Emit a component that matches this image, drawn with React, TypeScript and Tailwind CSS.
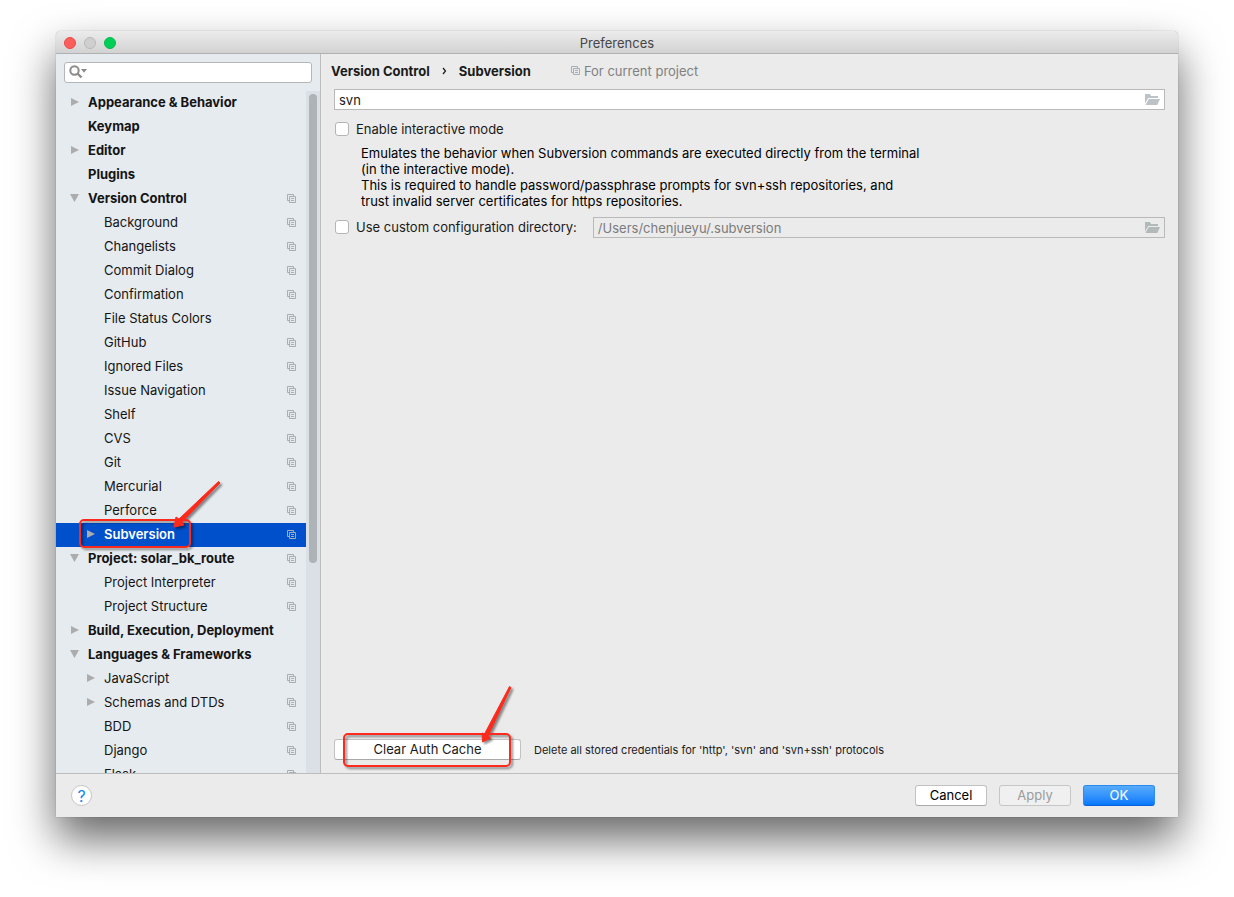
import { clsx } from "clsx"

type Item = {
  label: string
  level?: number
  bold?: boolean
  arrow?: "right" | "down"
  project?: boolean
  selected?: boolean
}

const items: Item[] = [
  { label: "Appearance & Behavior", bold: true, arrow: "right" },
  { label: "Keymap", bold: true },
  { label: "Editor", bold: true, arrow: "right" },
  { label: "Plugins", bold: true },
  { label: "Version Control", bold: true, arrow: "down", project: true },
  { label: "Background", level: 1, project: true },
  { label: "Changelists", level: 1, project: true },
  { label: "Commit Dialog", level: 1, project: true },
  { label: "Confirmation", level: 1, project: true },
  { label: "File Status Colors", level: 1, project: true },
  { label: "GitHub", level: 1, project: true },
  { label: "Ignored Files", level: 1, project: true },
  { label: "Issue Navigation", level: 1, project: true },
  { label: "Shelf", level: 1, project: true },
  { label: "CVS", level: 1, project: true },
  { label: "Git", level: 1, project: true },
  { label: "Mercurial", level: 1, project: true },
  { label: "Perforce", level: 1, project: true },
  { label: "Subversion", level: 1, arrow: "right", project: true, selected: true },
  { label: "Project: solar_bk_route", bold: true, arrow: "down", project: true },
  { label: "Project Interpreter", level: 1, project: true },
  { label: "Project Structure", level: 1, project: true },
  { label: "Build, Execution, Deployment", bold: true, arrow: "right" },
  { label: "Languages & Frameworks", bold: true, arrow: "down" },
  { label: "JavaScript", level: 1, arrow: "right", project: true },
  { label: "Schemas and DTDs", level: 1, arrow: "right", project: true },
  { label: "BDD", level: 1, project: true },
  { label: "Django", level: 1, project: true },
  { label: "Flask", level: 1, project: true },
]

function ProjectIcon() {
  return (
    <svg className="shrink-0" width="9" height="9" viewBox="0 0 9 9" fill="none" stroke="#a3aeb6" aria-hidden="true">
      <path d="M2 6.5H.5v-6h6V2" />
      <path d="M2.5 2.5h6v6h-6z" />
      <path d="M4 4.5h3M4 6.5h3" />
    </svg>
  )
}

function TreeArrow({ direction }: { direction?: "right" | "down" }) {
  return (
    <svg className="shrink-0" width="10" height="10" viewBox="0 0 10 10" fill="#acacac" aria-hidden="true">
      {direction === "right" && <path d="M1 1l8 4-8 4z" />}
      {direction === "down" && <path d="M0 1h9L4.500 9z" />}
    </svg>
  )
}

function FolderIcon({ color }: { color: string }) {
  return (
    <svg width="15" height="11" viewBox="0 0 15 11" aria-hidden="true">
      <path fill={color} d="M0 0h5l1 2h7v2H3.200L0 9.500z" />
      <path fill={color} d="M3.700 5H15l-2.700 6H.5z" />
    </svg>
  )
}

function SearchIcon() {
  return (
    <svg width="19" height="14" viewBox="0 0 19 14" fill="none" aria-hidden="true">
      <circle cx="5.500" cy="5.500" r="4.200" stroke="#8a8a8a" strokeWidth="2" />
      <path d="M8.500 8.500l4 4" stroke="#8a8a8a" strokeWidth="2.400" />
      <path d="M12 4h6l-3 3.800z" fill="#8a8a8a" />
    </svg>
  )
}

function SidebarMarker() {
  return (
    <svg
      className="pointer-events-none absolute -top-11 left-5 z-10 drop-shadow-[2px_2px_1px_rgba(0,0,0,0.45)]"
      width="150"
      height="74"
      viewBox="0 0 150 74"
      aria-hidden="true"
    >
      <rect x="4" y="41" width="110" height="27" rx="4" fill="none" stroke="#fc2a1c" strokeWidth="2" />
      <path d="M142.500 2.500L144 4 106 43l2 3-10 2 2-10 3 2z" fill="#fc2a1c" stroke="#fc2a1c" strokeLinejoin="round" />
    </svg>
  )
}

function ButtonMarker() {
  return (
    <svg
      className="pointer-events-none absolute -top-14 left-2 z-10 drop-shadow-[2px_2px_1px_rgba(0,0,0,0.45)]"
      width="180"
      height="90"
      viewBox="0 0 180 90"
      aria-hidden="true"
    >
      <rect x="2" y="51" width="166" height="32" rx="4" fill="none" stroke="#fc2a1c" strokeWidth="2" />
      <path d="M167.500 3.500l1.500 1L146 53l2.500 2-8 4-.5-9 2.500 1z" fill="#fc2a1c" stroke="#fc2a1c" strokeLinejoin="round" />
    </svg>
  )
}

function TreeRow({ item }: { item: Item }) {
  return (
    <li className="relative">
      <button
        type="button"
        className={clsx(
          "flex h-6 w-full items-center gap-2 pr-2.5 pb-0.5 text-left",
          item.level ? "pl-[30px]" : "pl-3.5",
          item.bold && "font-bold",
          item.selected ? "bg-[#004fcb] font-semibold text-white" : "text-[#141414]"
        )}
      >
        <TreeArrow direction={item.arrow} />
        <span className="flex-1 whitespace-nowrap">{item.label}</span>
        {item.project && <ProjectIcon />}
      </button>
      {item.selected && <SidebarMarker />}
    </li>
  )
}

function Sidebar() {
  return (
    <aside className="flex w-[265px] shrink-0 flex-col gap-2 border-r border-[#bdbdbd] bg-[#e6ebef] pt-2">
      <label className="mx-2 flex h-[21px] items-center rounded-[3px] border border-[#b4b7b9] bg-white pb-0.5 pl-1">
        <SearchIcon />
        <input type="text" aria-label="Search" className="min-w-0 flex-1 px-1 outline-none" />
      </label>
      <div className="flex min-h-0 flex-1 overflow-hidden">
        <ul className="min-w-0 flex-1">
          {items.map((item) => (
            <TreeRow key={item.label} item={item} />
          ))}
        </ul>
        <div className="w-3.5 shrink-0 bg-[#dae0e5] px-[3px] pt-[3px]">
          <div className="h-[69%] rounded-full bg-[#adb3b7]"></div>
        </div>
      </div>
    </aside>
  )
}

function Settings() {
  return (
    <main className="flex min-w-0 flex-1 flex-col">
      <div className="flex h-[35px] shrink-0 items-center pb-0.5 pl-2.5">
        <h1 className="flex items-center gap-3 font-bold text-[#1a1a1a]">
          Version Control
          <svg width="5" height="8" viewBox="0 0 5 8" fill="none" stroke="#1a1a1a" strokeWidth="1.200" aria-hidden="true">
            <path d="M1 1l2.500 3L1 7" />
          </svg>
          Subversion
        </h1>
        <p className="ml-10 flex items-center gap-1 text-[#808080]">
          <ProjectIcon />
          For current project
        </p>
      </div>

      <div className="flex min-h-0 flex-1 flex-col px-[13px] pb-[13px]">
        <div className="flex h-[21px] items-center border border-[#b9b9b9] bg-white pr-1">
          <input type="text" aria-label="Path to Subversion executable" defaultValue="svn" className="min-w-0 flex-1 px-1 outline-none" />
          <button type="button" aria-label="Browse executable">
            <FolderIcon color="#bcc4c9" />
          </button>
        </div>

        <label className="mt-[11px] flex h-4 items-center gap-[7px] pl-px">
          <input type="checkbox" className="size-3.5 appearance-none rounded-[3px] border border-[#b5b5b5] bg-white" />
          Enable interactive mode
        </label>
        <p className="mt-2 pl-[27px] leading-4 text-black">
          Emulates the behavior when Subversion commands are executed directly from the terminal
          <br />
          (in the interactive mode).
          <br />
          This is required to handle password/passphrase prompts for svn+ssh repositories, and
          <br />
          trust invalid server certificates for https repositories.
        </p>

        <div className="mt-2 flex items-center gap-4">
          <label className="flex items-center gap-[7px] pb-px pl-px">
            <input type="checkbox" className="size-3.5 appearance-none rounded-[3px] border border-[#b5b5b5] bg-white" />
            Use custom configuration directory:
          </label>
          <div className="flex h-[21px] min-w-0 flex-1 items-center border border-[#b9b9b9] pr-1">
            <input
              type="text"
              aria-label="Configuration directory"
              defaultValue="/Users/chenjueyu/.subversion"
              disabled
              className="min-w-0 flex-1 px-1 text-[#7b7b7b]"
            />
            <button type="button" aria-label="Browse directory" disabled>
              <FolderIcon color="#b1b9ba" />
            </button>
          </div>
        </div>

        <div className="mt-auto flex items-center gap-[13px]">
          <div className="relative">
            <button type="button" className="h-[21px] w-[187px] rounded-[3px] border border-[#c2c2c2] border-b-[#a9a9a9] bg-white pb-px">
              Clear Auth Cache
            </button>
            <ButtonMarker />
          </div>
          <p className="text-[11px]">Delete all stored credentials for 'http', 'svn' and 'svn+ssh' protocols</p>
        </div>
      </div>
    </main>
  )
}

export default function App() {
  return (
    <div className="h-screen overflow-hidden bg-white px-14 pt-[31px] pb-20 font-[Inter,sans-serif] text-[13px] leading-4 text-[#1a1a1a]">
      <div className="flex h-full flex-col rounded-t-[5px] bg-[#ebebeb] shadow-[0_0_1px_rgba(0,0,0,0.5),0_22px_44px_rgba(0,0,0,0.6)]">
        <header className="relative flex h-[23px] shrink-0 items-center justify-center rounded-t-[5px] border-b border-[#b1b1b1] bg-linear-to-b from-[#ececec] to-[#d2d2d2] pt-0.5 text-[#464646]">
          <div className="absolute left-2 flex gap-2">
            <button type="button" aria-label="Close" className="size-3 rounded-full border border-[#e94b47] bg-[#fc5f5b]"></button>
            <button type="button" aria-label="Minimize" className="size-3 rounded-full border border-[#b9b9b9] bg-[#cfcfcf]"></button>
            <button type="button" aria-label="Zoom" className="size-3 rounded-full border border-[#06b94e] bg-[#00cf57]"></button>
          </div>
          Preferences
        </header>

        <div className="flex min-h-0 flex-1">
          <Sidebar />
          <Settings />
        </div>

        <footer className="flex h-11 shrink-0 items-center gap-3 border-t border-[#bdbdbd] pr-[23px] pl-[15px]">
          <button
            type="button"
            aria-label="Help"
            className="mr-auto size-[21px] rounded-full border border-[#c4c4c4] bg-white text-base leading-4 text-[#1085f5]"
          >
            ?
          </button>
          <button type="button" className="h-[21px] w-[72px] rounded-[3px] border border-[#c2c2c2] border-b-[#a9a9a9] bg-white pb-px text-black">
            Cancel
          </button>
          <button type="button" disabled className="h-[21px] w-[72px] rounded-[3px] border border-[#c6c6c6] bg-[#f0f0f0] pb-px text-[#9b9b9b]">
            Apply
          </button>
          <button
            type="button"
            className="h-[21px] w-[72px] rounded-[3px] border border-[#2a8bf0] border-b-[#0a62d8] bg-linear-to-b from-[#57abf8] to-[#0078fe] pb-px font-medium text-[#eaf4ff]"
          >
            OK
          </button>
        </footer>
      </div>
    </div>
  )
}
